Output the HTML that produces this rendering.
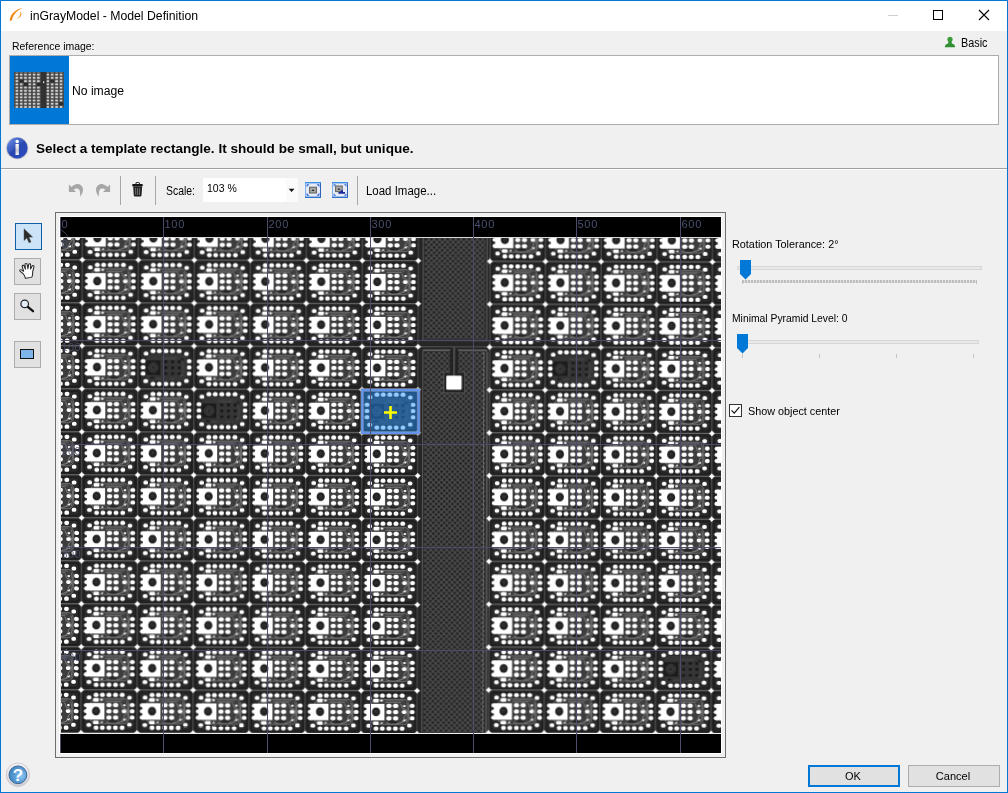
<!DOCTYPE html>
<html lang="en">
<head>
<meta charset="utf-8">
<title>inGrayModel - Model Definition</title>
<style>
*{box-sizing:border-box;margin:0;padding:0}
html,body{width:1008px;height:793px;overflow:hidden;background:#f0f0f0}
body{position:relative;font-family:"Liberation Sans",sans-serif;font-size:12px;color:#000}
.abs{position:absolute}
.t{position:absolute;white-space:nowrap;line-height:1}
#frame{position:absolute;left:0;top:0;width:1008px;height:793px;border:1px solid #0078d7;border-top-width:1px;pointer-events:none;z-index:50}
#titlebar{position:absolute;left:1px;top:1px;width:1006px;height:30px;background:#fff}
.btn{position:absolute;background:#e1e1e1;border:1px solid #adadad}
.sep{position:absolute;width:1px;background:#a8a8a8}
</style>
</head>
<body>
<div id="titlebar"></div>
<div id="frame"></div>

<!-- title icon -->
<svg class="abs" style="left:8px;top:6px" width="18" height="18" viewBox="0 0 18 18">
  <path d="M1.8 14.8 C1.9 8.6 7 3.4 15 1.8 C9 4.4 5.2 8.6 3.9 14.4 Z" fill="#f08a1c"/>
  <path d="M13 5.8 C14.3 9.3 12.4 12.3 7.8 12.9 C11.2 11.6 12.4 9.4 12.2 6.2 Z" fill="#f4a040"/>
</svg>
<div class="t" id="title" style="left:30px;top:10px;font-size:12.3px;transform:scaleX(0.9953);transform-origin:left center;">inGrayModel - Model Definition</div>

<!-- window controls -->
<div class="abs" style="left:888px;top:15px;width:10px;height:1px;background:#cfcfcf"></div>
<div class="abs" style="left:933px;top:10px;width:10px;height:10px;border:1px solid #000"></div>
<svg class="abs" style="left:978px;top:9px" width="12" height="12" viewBox="0 0 12 12"><path d="M1 1 L11 11 M11 1 L1 11" stroke="#000" stroke-width="1.1" fill="none"/></svg>

<!-- reference image header -->
<div class="t" id="reflabel" style="left:12px;top:41px;font-size:11px;transform:scaleX(0.9505);transform-origin:left center;">Reference image:</div>
<svg class="abs" style="left:944px;top:36px" width="12" height="12" viewBox="0 0 12 12">
  <circle cx="6" cy="3.3" r="2.6" fill="#3c9a3c"/>
  <path d="M4.6 5 L7.4 5 L7.9 7.4 C10 7.8 11 9 11.2 11.2 L0.8 11.2 C1 9 2 7.8 4.1 7.4 Z" fill="#2f8f32"/>
</svg>
<div class="t" id="basic" style="left:961.3px;top:37px;font-size:12px;transform:scaleX(0.9010);transform-origin:left center;">Basic</div>

<!-- reference list -->
<div class="abs" style="left:9px;top:55px;width:990px;height:70px;background:#fff;border:1px solid #adadad"></div>
<div class="abs" style="left:10px;top:56px;width:59px;height:68px;background:#0078d7"></div>
<svg class="abs" style="left:14px;top:72px" width="50" height="36" viewBox="0 0 50 36">
  <defs>
    <pattern id="thumbp" width="4.3" height="3.24" patternUnits="userSpaceOnUse" x="0.75" y="1">
      <rect width="4.3" height="3.24" fill="#484848"/>
      <rect x="0.8" y="0.55" width="2.7" height="2.1" rx="0.6" fill="#cdcdcd"/>
    </pattern>
    <pattern id="thumbq" width="4.44" height="3.24" patternUnits="userSpaceOnUse" x="31.5" y="1">
      <rect width="4.44" height="3.24" fill="#484848"/>
      <rect x="0.85" y="0.55" width="2.75" height="2.1" rx="0.6" fill="#cdcdcd"/>
    </pattern>
    <filter id="tblur" x="-5%" y="-5%" width="110%" height="110%"><feGaussianBlur stdDeviation="0.45"/></filter>
    <clipPath id="tclip"><rect width="50" height="36"/></clipPath>
  </defs>
  <g clip-path="url(#tclip)"><g filter="url(#tblur)">
  <rect x="-2" y="-2" width="54" height="40" fill="url(#thumbp)"/>
  <rect x="31.5" y="-2" width="22" height="40" fill="url(#thumbq)"/>
  <rect x="27" y="-2" width="5.4" height="40" fill="#303030"/>
  <rect x="5.6" y="7.6" width="4" height="3" fill="#2c2c2c"/>
  <rect x="10" y="10.9" width="4" height="3" fill="#2c2c2c"/>
  <rect x="22.8" y="10.9" width="4" height="3" fill="#2c2c2c"/>
  <rect x="36.1" y="7.6" width="4" height="3" fill="#2c2c2c"/>
  <rect x="45" y="30.3" width="4" height="3" fill="#2c2c2c"/>
  <rect x="29" y="9.3" width="1.3" height="1.8" fill="#d8d8d8"/>
  </g></g>
</svg>
<div class="t" id="noimage" style="left:72px;top:85px;font-size:12.3px;transform:scaleX(0.9886);transform-origin:left center;">No image</div>

<!-- info row -->
<svg class="abs" style="left:5px;top:136px" width="25" height="25" viewBox="-0.2 0 25 25">
  <defs>
    <linearGradient id="ig" x1="0.1" y1="0.05" x2="0.85" y2="0.95">
      <stop offset="0" stop-color="#6a8ae4"/>
      <stop offset="0.45" stop-color="#3556bc"/>
      <stop offset="0.5" stop-color="#2947ae"/>
      <stop offset="1" stop-color="#2b4cc0"/>
    </linearGradient>
    <linearGradient id="istem" x1="0" y1="0" x2="0" y2="1">
      <stop offset="0" stop-color="#fff"/><stop offset="0.6" stop-color="#c8c8cc"/><stop offset="1" stop-color="#f4f4f4"/>
    </linearGradient>
  </defs>
  <circle cx="12" cy="12.2" r="11.1" fill="#c4c4cc"/>
  <circle cx="12" cy="12" r="10.4" fill="url(#ig)"/>
  <rect x="10.3" y="8" width="3.4" height="10.9" rx="0.5" fill="url(#istem)"/>
  <circle cx="12" cy="5.6" r="1.75" fill="#fff"/>
</svg>
<div class="t" id="info" style="left:36px;top:142px;font-size:13px;font-weight:bold;transform:scaleX(1.0431);transform-origin:left center;">Select a template rectangle. It should be small, but unique.</div>
<div class="abs" style="left:1px;top:168px;width:1006px;height:1px;background:#a0a0a0"></div>
<div class="abs" style="left:1px;top:169px;width:1006px;height:1px;background:#fff"></div>

<!-- toolbar -->
<svg class="abs" style="left:68px;top:183px" width="16" height="14" viewBox="0 0 16 14">
  <path d="M0.9 1.4 L0.9 8.9 L7.9 8.9 L5.7 6.6 C7.5 5 10.5 5 11.6 7.4 C12.3 9 12.2 11.5 12.3 13.8 C14 11 15.4 8.5 14.9 5.6 C14.2 2 10.5 0.4 7.5 1.4 C5.8 1.9 4.6 2.8 3.5 4.1 Z" fill="#a6a6a6"/>
</svg>
<svg class="abs" style="left:95px;top:183px" width="16" height="14" viewBox="0 0 16 14">
  <g transform="translate(16,0) scale(-1,1)">
  <path d="M0.9 1.4 L0.9 8.9 L7.9 8.9 L5.7 6.6 C7.5 5 10.5 5 11.6 7.4 C12.3 9 12.2 11.5 12.3 13.8 C14 11 15.4 8.5 14.9 5.6 C14.2 2 10.5 0.4 7.5 1.4 C5.8 1.9 4.6 2.8 3.5 4.1 Z" fill="#a6a6a6"/>
  </g>
</svg>
<div class="sep" style="left:120px;top:176px;height:29px"></div>
<svg class="abs" style="left:131px;top:182px" width="14" height="16" viewBox="0 0 14 16">
  <path d="M5 2 V1.1 C5 0.6 5.3 0.4 5.8 0.4 H7.6 C8.1 0.4 8.4 0.6 8.4 1.1 V2" fill="none" stroke="#1a1a1a" stroke-width="1"/>
  <rect x="1.2" y="1.9" width="10.6" height="2.5" rx="0.9" fill="#141414"/>
  <path d="M2.2 4.4 L11.1 4.4 L10.5 13.4 C10.4 14.1 10 14.4 9.4 14.4 L3.9 14.4 C3.3 14.4 2.9 14.1 2.8 13.4 Z" fill="#1e1e1e"/>
  <path d="M4.6 5.8 L4.8 13 M6.65 5.8 L6.65 13 M8.7 5.8 L8.5 13" stroke="#8c8c8c" stroke-width="0.8"/>
</svg>
<div class="sep" style="left:155px;top:176px;height:29px"></div>
<div class="t" id="scale" style="left:165.5px;top:185px;font-size:12px;transform:scaleX(0.8683);transform-origin:left center;">Scale:</div>
<div class="abs" style="left:203px;top:178px;width:95px;height:24px;background:#fff"></div>
<div class="abs" style="left:286px;top:178px;width:12px;height:24px;background:#fafafa"></div>
<div class="t" id="pct" style="left:206.8px;top:183px;font-size:11px;transform:scaleX(0.9519);transform-origin:left center;">103 %</div>
<svg class="abs" style="left:288px;top:188px" width="7" height="5" viewBox="0 0 7 5"><path d="M0.7 0.7 L6.5 0.7 L3.6 4 Z" fill="#111"/></svg>

<svg class="abs" style="left:305px;top:182px" width="16" height="16" viewBox="0 0 16 16">
  <rect x="0" y="0" width="16" height="16" fill="#e6ecf6"/>
  <path d="M0.5 0 V16" stroke="#7db4ee" stroke-width="1"/><path d="M15.5 0 V16" stroke="#2f62b4" stroke-width="1"/>
  <path d="M0 0.7 H16" stroke="#3c8ee6" stroke-width="1.4"/><path d="M0 15.3 H16" stroke="#2f74cc" stroke-width="1.4"/>
  <path d="M1.6 2.2 H4.6 L1.6 5.2 Z M14.4 2.2 H11.4 L14.4 5.2 Z M1.6 13.8 H4.6 L1.6 10.8 Z M14.4 13.8 H11.4 L14.4 10.8 Z" fill="#3a6fe0"/>
  <rect x="4.6" y="5.2" width="6.8" height="5.8" fill="#a8a8a8" stroke="#5e5e5e" stroke-width="1"/>
  <path d="M6.4 9 L8 7.2 L9.6 9 Z" fill="#222"/>
</svg>
<svg class="abs" style="left:332px;top:182px" width="16" height="16" viewBox="0 0 16 16">
  <rect x="0" y="0" width="16" height="16" fill="#e6ecf6"/>
  <path d="M0.5 0 V16" stroke="#7db4ee" stroke-width="1"/><path d="M15.5 0 V16" stroke="#2f62b4" stroke-width="1"/>
  <path d="M0 0.7 H16" stroke="#3c8ee6" stroke-width="1.4"/><path d="M0 15.3 H16" stroke="#2f74cc" stroke-width="1.4"/>
  <path d="M1.6 2.2 H4.2 L1.6 4.8 Z M14.4 2.2 H11.8 L14.4 4.8 Z M1.6 13.8 H4.2 L1.6 11.2 Z M14.4 13.8 H11.8 L14.4 11.2 Z" fill="#3a6fe0"/>
  <rect x="3.6" y="4" width="6.6" height="5.6" fill="#a8a8a8" stroke="#5e5e5e" stroke-width="1"/>
  <path d="M5.4 7.8 L6.9 6 L8.4 7.8 Z" fill="#222"/>
  <path d="M8.6 8.2 H11 V10 H13 V11.8 H6.4 V10 H8.6 Z" fill="#1b2a9a"/>
</svg>
<div class="sep" style="left:357px;top:176px;height:29px"></div>
<div class="t" id="load" style="left:365.5px;top:185px;font-size:12px;transform:scaleX(0.9550);transform-origin:left center;">Load Image...</div>

<!-- left tool buttons -->
<div class="btn" style="left:15px;top:223px;width:27px;height:27px;background:#cce4f7;border-color:#0f5fa8"></div>
<svg class="abs" style="left:23px;top:228px" width="12" height="17" viewBox="0 0 12 17">
  <path d="M1 0.8 L1 12.6 L3.9 9.9 L6 14.8 L8 13.9 L5.9 9.2 L9.6 9 Z" fill="#2b2b2b" stroke="#555" stroke-width="0.5"/>
</svg>
<div class="btn" style="left:14px;top:258px;width:27px;height:27px"></div>
<svg class="abs" style="left:18px;top:262px" width="19" height="19" viewBox="0 0 19 19">
  <path transform="translate(9.5 9) rotate(-8) scale(1.28 1.12) translate(-9 -8.4)" d="M5.5 10.5 L3.2 7.6 C2.6 6.8 3.6 5.9 4.4 6.6 L6 8.2 L5.4 3.6 C5.3 2.6 6.7 2.4 6.9 3.4 L7.6 6.6 L7.8 2.2 C7.8 1.2 9.3 1.2 9.4 2.2 L9.6 6.5 L10.6 2.8 C10.9 1.8 12.2 2.1 12.1 3.1 L11.6 7 L13.2 4.6 C13.8 3.8 14.9 4.5 14.5 5.4 L13 9.4 C12.8 11.6 12.6 13 11.6 14.6 L6.6 14.6 C6.4 12.8 6.2 11.6 5.5 10.5 Z" fill="#fff" stroke="#222" stroke-width="0.8" stroke-linejoin="round"/>
</svg>
<div class="btn" style="left:14px;top:293px;width:27px;height:27px"></div>
<svg class="abs" style="left:19px;top:298px" width="17" height="17" viewBox="0 0 17 17">
  <circle cx="5.7" cy="5.9" r="3.8" fill="#e4ecf6" stroke="#222" stroke-width="1.2"/>
  <path d="M8.8 8.9 L14 13.2" stroke="#111" stroke-width="2.3" stroke-linecap="round"/>
</svg>
<div class="btn" style="left:14px;top:341px;width:27px;height:27px"></div>
<div class="abs" style="left:20px;top:349px;width:14px;height:10px;background:#7eb4ea;border:1px solid #111"></div>

<!-- image panel frame -->
<div class="abs" style="left:55px;top:212px;width:671px;height:546px;background:#f0f0f0;border:1px solid #6d6d6d"></div>
<div class="abs" style="left:59px;top:216px;width:663px;height:538px;background:#fff"></div>
<svg class="abs" style="left:60px;top:217px" width="661" height="536" viewBox="60 217 661 536">
<defs>
<clipPath id="imgclip"><rect x="60" y="238" width="661" height="495"/></clipPath>
<filter id="soft" x="-2%" y="-2%" width="104%" height="104%"><feGaussianBlur stdDeviation="0.42"/></filter>
<g id="cn"><rect x="0" y="0" width="56.2" height="43.2" fill="#242424"/><rect x="2.6" y="2.6" width="50.8" height="37.8" rx="3" ry="3" fill="#292929" stroke="#1e1e1e" stroke-width="1.1"/><path d="M0 0 H56" stroke="#888888" stroke-width="0.8" fill="none"/><path d="M0 0 V43" stroke="#5e5e5e" stroke-width="0.8" fill="none"/><rect x="9.5" y="8.6" width="38.4" height="25.4" rx="5.5" ry="5.5" fill="#3e3e3e" stroke="#727272" stroke-width="0.9"/><path d="M24 10.2 H42.5 M24 11.8 H40" stroke="#868686" stroke-width="0.6"/><path d="M39.4 13 C41.5 15.5 39.5 17.5 43.6 18.4 C47 19.4 46.6 23 44.4 24.6 C42.6 26 43.6 28.6 40.8 31.6" stroke="#9a9a9a" stroke-width="0.8" fill="none"/><path d="M45.6 12 C47.4 16 47.4 27 45.4 31.2" stroke="#808080" stroke-width="0.8" fill="none"/><path d="M25 32.2 C31 34 39 33.4 44.4 29.8" stroke="#888" stroke-width="0.9" fill="none"/><ellipse cx="32" cy="31.2" rx="4.5" ry="1.6" fill="#282828"/><rect x="12.65" y="2.9" width="4.7" height="4.2" rx="1.83" ry="1.64" fill="#fff"/><rect x="12.65" y="35.8" width="4.7" height="4.2" rx="1.83" ry="1.64" fill="#fff"/><rect x="18.95" y="2.9" width="4.7" height="4.2" rx="1.83" ry="1.64" fill="#fff"/><rect x="18.95" y="35.8" width="4.7" height="4.2" rx="1.83" ry="1.64" fill="#fff"/><rect x="25.55" y="2.9" width="4.7" height="4.2" rx="1.83" ry="1.64" fill="#fff"/><rect x="25.55" y="35.8" width="4.7" height="4.2" rx="1.83" ry="1.64" fill="#fff"/><rect x="32.05" y="2.9" width="4.7" height="4.2" rx="1.83" ry="1.64" fill="#fff"/><rect x="32.05" y="35.8" width="4.7" height="4.2" rx="1.83" ry="1.64" fill="#fff"/><rect x="38.75" y="2.9" width="4.7" height="4.2" rx="1.83" ry="1.64" fill="#fff"/><rect x="38.75" y="35.8" width="4.7" height="4.2" rx="1.83" ry="1.64" fill="#fff"/><rect x="5.7" y="5.5" width="4.6" height="4" rx="1.79" ry="1.56" fill="#fff"/><rect x="46.1" y="5.7" width="4.6" height="4" rx="1.79" ry="1.56" fill="#fff"/><rect x="5.5" y="33" width="4.6" height="4" rx="1.79" ry="1.56" fill="#fff"/><rect x="46.1" y="32.9" width="4.6" height="4" rx="1.79" ry="1.56" fill="#fff"/><rect x="48.75" y="13.05" width="4.7" height="4.1" rx="1.83" ry="1.6" fill="#fff"/><rect x="48.75" y="19.3" width="4.7" height="4.1" rx="1.83" ry="1.6" fill="#fff"/><rect x="48.75" y="25.55" width="4.7" height="4.1" rx="1.83" ry="1.6" fill="#fff"/><rect x="5.3" y="13.2" width="18.1" height="16.5" fill="#fff"/><ellipse cx="5.2" cy="15.3" rx="2.6" ry="2.1" fill="#fff"/><ellipse cx="5.2" cy="21.4" rx="2.6" ry="2" fill="#fff"/><ellipse cx="5.2" cy="27.55" rx="2.6" ry="2.15" fill="#fff"/><ellipse cx="15" cy="21.2" rx="4.1" ry="4.45" fill="#242424"/><ellipse cx="14.8" cy="20.8" rx="1.5" ry="1.7" fill="#303030"/><rect x="12" y="8.1" width="5.7" height="3.7" rx="1" fill="#fff"/><ellipse cx="20.4" cy="10" rx="1.5" ry="1.1" fill="#f4f4f4"/><rect x="12" y="30.7" width="5.6" height="3.6" rx="1" fill="#fff"/><path d="M18.8 32.9 L21.4 31 L21.8 33 Z" fill="#f4f4f4"/><rect x="25.35" y="12.95" width="5.1" height="4.3" rx="1.99" ry="1.68" fill="#fff"/><rect x="25.35" y="19.2" width="5.1" height="4.3" rx="1.99" ry="1.68" fill="#fff"/><rect x="25.35" y="25.45" width="5.1" height="4.3" rx="1.99" ry="1.68" fill="#fff"/><rect x="32.05" y="12.95" width="5.1" height="4.3" rx="1.99" ry="1.68" fill="#fff"/><rect x="32.05" y="19.2" width="5.1" height="4.3" rx="1.99" ry="1.68" fill="#fff"/><rect x="32.05" y="25.45" width="5.1" height="4.3" rx="1.99" ry="1.68" fill="#fff"/><rect x="40.75" y="19.45" width="4.5" height="3.8" rx="1.76" ry="1.48" fill="#fff"/><rect x="42" y="14.2" width="2.6" height="2.2" rx="1.01" ry="0.86" fill="#f0f0f0"/><path d="M41.6 29.6 L45 28.2 L44.2 30.8 Z" fill="#f4f4f4"/></g>
<g id="cd"><rect x="0" y="0" width="56.2" height="43.2" fill="#242424"/><rect x="2.6" y="2.6" width="50.8" height="37.8" rx="3" ry="3" fill="#292929" stroke="#1e1e1e" stroke-width="1.1"/><path d="M0 0 H56" stroke="#888888" stroke-width="0.8" fill="none"/><path d="M0 0 V43" stroke="#5e5e5e" stroke-width="0.8" fill="none"/><rect x="12.65" y="2.9" width="4.7" height="4.2" rx="1.83" ry="1.64" fill="#fff"/><rect x="12.65" y="35.8" width="4.7" height="4.2" rx="1.83" ry="1.64" fill="#fff"/><rect x="18.95" y="2.9" width="4.7" height="4.2" rx="1.83" ry="1.64" fill="#fff"/><rect x="18.95" y="35.8" width="4.7" height="4.2" rx="1.83" ry="1.64" fill="#fff"/><rect x="25.55" y="2.9" width="4.7" height="4.2" rx="1.83" ry="1.64" fill="#fff"/><rect x="25.55" y="35.8" width="4.7" height="4.2" rx="1.83" ry="1.64" fill="#fff"/><rect x="32.05" y="2.9" width="4.7" height="4.2" rx="1.83" ry="1.64" fill="#fff"/><rect x="32.05" y="35.8" width="4.7" height="4.2" rx="1.83" ry="1.64" fill="#fff"/><rect x="38.75" y="2.9" width="4.7" height="4.2" rx="1.83" ry="1.64" fill="#fff"/><rect x="38.75" y="35.8" width="4.7" height="4.2" rx="1.83" ry="1.64" fill="#fff"/><rect x="5.7" y="5.5" width="4.6" height="4" rx="1.79" ry="1.56" fill="#fff"/><rect x="46.1" y="5.7" width="4.6" height="4" rx="1.79" ry="1.56" fill="#fff"/><rect x="5.5" y="33" width="4.6" height="4" rx="1.79" ry="1.56" fill="#fff"/><rect x="46.1" y="32.9" width="4.6" height="4" rx="1.79" ry="1.56" fill="#fff"/><rect x="48.75" y="13.05" width="4.7" height="4.1" rx="1.83" ry="1.6" fill="#fff"/><rect x="2.75" y="13.05" width="4.7" height="4.1" rx="1.83" ry="1.6" fill="#fff"/><rect x="48.75" y="19.3" width="4.7" height="4.1" rx="1.83" ry="1.6" fill="#fff"/><rect x="2.75" y="19.3" width="4.7" height="4.1" rx="1.83" ry="1.6" fill="#fff"/><rect x="48.75" y="25.55" width="4.7" height="4.1" rx="1.83" ry="1.6" fill="#fff"/><rect x="2.75" y="25.55" width="4.7" height="4.1" rx="1.83" ry="1.6" fill="#fff"/><rect x="8.6" y="8.8" width="40" height="25.6" rx="5.5" ry="5.5" fill="#343434" stroke="#3e3e3e" stroke-width="0.6"/><rect x="8" y="14.4" width="14.6" height="14.4" fill="#1b1b1b"/><circle cx="15.2" cy="21.6" r="4.7" fill="#2a2a2a" stroke="#4a4a4a" stroke-width="0.8"/><circle cx="15.2" cy="21.6" r="2.5" fill="#343434" stroke="#484848" stroke-width="0.6"/><circle cx="15.2" cy="21.6" r="1" fill="#1e1e1e"/><rect x="26.4" y="14.4" width="3" height="2.6" rx="1.17" ry="1.01" fill="#181818"/><rect x="26.4" y="20.4" width="3" height="2.6" rx="1.17" ry="1.01" fill="#181818"/><rect x="26.4" y="26.3" width="3" height="2.6" rx="1.17" ry="1.01" fill="#181818"/><rect x="33.1" y="14.4" width="3" height="2.6" rx="1.17" ry="1.01" fill="#181818"/><rect x="33.1" y="20.4" width="3" height="2.6" rx="1.17" ry="1.01" fill="#181818"/><rect x="33.1" y="26.3" width="3" height="2.6" rx="1.17" ry="1.01" fill="#181818"/><rect x="39.7" y="14.4" width="3" height="2.6" rx="1.17" ry="1.01" fill="#181818"/><rect x="39.7" y="20.4" width="3" height="2.6" rx="1.17" ry="1.01" fill="#181818"/><rect x="39.7" y="26.3" width="3" height="2.6" rx="1.17" ry="1.01" fill="#181818"/><path d="M23.5 11.4 H40 M26 12.8 H38" stroke="#505050" stroke-width="0.6"/><path d="M24.2 12.5 L23.2 14 M23.4 16 V29" stroke="#4c4c4c" stroke-width="0.6"/><path d="M41.5 12.5 C46 15 46.6 26 42.6 31.6 M42 29 H46 M18 32.4 H24 M32 32.6 H37" stroke="#4e4e4e" stroke-width="0.8" fill="none"/><ellipse cx="14" cy="31.8" rx="2" ry="1.2" fill="#1f1f1f"/><ellipse cx="44" cy="13.4" rx="1.8" ry="1.4" fill="#222"/></g>
<pattern id="mesh" width="5.4" height="5.4" patternUnits="userSpaceOnUse" x="424" y="238"><rect width="5.4" height="5.4" fill="#494949"/><circle cx="1.35" cy="1.35" r="1.3" fill="#1f1f1f"/><circle cx="4.05" cy="4.05" r="1.3" fill="#1f1f1f"/></pattern>
</defs>
<rect x="60" y="217" width="661" height="536" fill="#000"/>
<rect x="60" y="237" width="661" height="1" fill="#d8d8d8"/>
<rect x="60" y="733" width="661" height="1" fill="#f0f0f0"/>
<g clip-path="url(#imgclip)">
<rect x="60" y="237" width="661" height="496" fill="#2c2c2c"/>
<g filter="url(#soft)"><g transform="rotate(0.16 390 485)">
<use href="#cn" x="25.7" y="217.7"/>
<use href="#cn" x="25.7" y="260.7"/>
<use href="#cn" x="25.7" y="303.7"/>
<use href="#cn" x="25.7" y="346.7"/>
<use href="#cn" x="25.7" y="389.7"/>
<use href="#cn" x="25.7" y="432.7"/>
<use href="#cn" x="25.7" y="475.7"/>
<use href="#cn" x="25.7" y="518.7"/>
<use href="#cn" x="25.7" y="561.7"/>
<use href="#cn" x="25.7" y="604.7"/>
<use href="#cn" x="25.7" y="647.7"/>
<use href="#cn" x="25.7" y="690.7"/>
<use href="#cn" x="25.7" y="733.7"/>
<use href="#cn" x="81.7" y="217.7"/>
<use href="#cn" x="81.7" y="260.7"/>
<use href="#cn" x="81.7" y="303.7"/>
<use href="#cn" x="81.7" y="346.7"/>
<use href="#cn" x="81.7" y="389.7"/>
<use href="#cn" x="81.7" y="432.7"/>
<use href="#cn" x="81.7" y="475.7"/>
<use href="#cn" x="81.7" y="518.7"/>
<use href="#cn" x="81.7" y="561.7"/>
<use href="#cn" x="81.7" y="604.7"/>
<use href="#cn" x="81.7" y="647.7"/>
<use href="#cn" x="81.7" y="690.7"/>
<use href="#cn" x="81.7" y="733.7"/>
<use href="#cn" x="137.7" y="217.7"/>
<use href="#cn" x="137.7" y="260.7"/>
<use href="#cn" x="137.7" y="303.7"/>
<use href="#cd" x="137.7" y="346.7"/>
<use href="#cn" x="137.7" y="389.7"/>
<use href="#cn" x="137.7" y="432.7"/>
<use href="#cn" x="137.7" y="475.7"/>
<use href="#cn" x="137.7" y="518.7"/>
<use href="#cn" x="137.7" y="561.7"/>
<use href="#cn" x="137.7" y="604.7"/>
<use href="#cn" x="137.7" y="647.7"/>
<use href="#cn" x="137.7" y="690.7"/>
<use href="#cn" x="137.7" y="733.7"/>
<use href="#cn" x="193.7" y="217.7"/>
<use href="#cn" x="193.7" y="260.7"/>
<use href="#cn" x="193.7" y="303.7"/>
<use href="#cn" x="193.7" y="346.7"/>
<use href="#cd" x="193.7" y="389.7"/>
<use href="#cn" x="193.7" y="432.7"/>
<use href="#cn" x="193.7" y="475.7"/>
<use href="#cn" x="193.7" y="518.7"/>
<use href="#cn" x="193.7" y="561.7"/>
<use href="#cn" x="193.7" y="604.7"/>
<use href="#cn" x="193.7" y="647.7"/>
<use href="#cn" x="193.7" y="690.7"/>
<use href="#cn" x="193.7" y="733.7"/>
<use href="#cn" x="249.7" y="217.7"/>
<use href="#cn" x="249.7" y="260.7"/>
<use href="#cn" x="249.7" y="303.7"/>
<use href="#cn" x="249.7" y="346.7"/>
<use href="#cn" x="249.7" y="389.7"/>
<use href="#cn" x="249.7" y="432.7"/>
<use href="#cn" x="249.7" y="475.7"/>
<use href="#cn" x="249.7" y="518.7"/>
<use href="#cn" x="249.7" y="561.7"/>
<use href="#cn" x="249.7" y="604.7"/>
<use href="#cn" x="249.7" y="647.7"/>
<use href="#cn" x="249.7" y="690.7"/>
<use href="#cn" x="249.7" y="733.7"/>
<use href="#cn" x="305.7" y="217.7"/>
<use href="#cn" x="305.7" y="260.7"/>
<use href="#cn" x="305.7" y="303.7"/>
<use href="#cn" x="305.7" y="346.7"/>
<use href="#cn" x="305.7" y="389.7"/>
<use href="#cn" x="305.7" y="432.7"/>
<use href="#cn" x="305.7" y="475.7"/>
<use href="#cn" x="305.7" y="518.7"/>
<use href="#cn" x="305.7" y="561.7"/>
<use href="#cn" x="305.7" y="604.7"/>
<use href="#cn" x="305.7" y="647.7"/>
<use href="#cn" x="305.7" y="690.7"/>
<use href="#cn" x="305.7" y="733.7"/>
<use href="#cn" x="361.7" y="217.7"/>
<use href="#cn" x="361.7" y="260.7"/>
<use href="#cn" x="361.7" y="303.7"/>
<use href="#cn" x="361.7" y="346.7"/>
<use href="#cd" x="361.7" y="389.7"/>
<use href="#cn" x="361.7" y="432.7"/>
<use href="#cn" x="361.7" y="475.7"/>
<use href="#cn" x="361.7" y="518.7"/>
<use href="#cn" x="361.7" y="561.7"/>
<use href="#cn" x="361.7" y="604.7"/>
<use href="#cn" x="361.7" y="647.7"/>
<use href="#cn" x="361.7" y="690.7"/>
<use href="#cn" x="361.7" y="733.7"/>
<use href="#cn" x="489.2" y="218.18"/>
<use href="#cn" x="489.2" y="261.05"/>
<use href="#cn" x="489.2" y="303.92"/>
<use href="#cn" x="489.2" y="346.79"/>
<use href="#cn" x="489.2" y="389.66"/>
<use href="#cn" x="489.2" y="432.53"/>
<use href="#cn" x="489.2" y="475.4"/>
<use href="#cn" x="489.2" y="518.27"/>
<use href="#cn" x="489.2" y="561.14"/>
<use href="#cn" x="489.2" y="604.01"/>
<use href="#cn" x="489.2" y="646.88"/>
<use href="#cn" x="489.2" y="689.75"/>
<use href="#cn" x="489.2" y="732.62"/>
<use href="#cn" x="544.85" y="218.18"/>
<use href="#cn" x="544.85" y="261.05"/>
<use href="#cn" x="544.85" y="303.92"/>
<use href="#cd" x="544.85" y="346.79"/>
<use href="#cn" x="544.85" y="389.66"/>
<use href="#cn" x="544.85" y="432.53"/>
<use href="#cn" x="544.85" y="475.4"/>
<use href="#cn" x="544.85" y="518.27"/>
<use href="#cn" x="544.85" y="561.14"/>
<use href="#cn" x="544.85" y="604.01"/>
<use href="#cn" x="544.85" y="646.88"/>
<use href="#cn" x="544.85" y="689.75"/>
<use href="#cn" x="544.85" y="732.62"/>
<use href="#cn" x="600.5" y="218.18"/>
<use href="#cn" x="600.5" y="261.05"/>
<use href="#cn" x="600.5" y="303.92"/>
<use href="#cn" x="600.5" y="346.79"/>
<use href="#cn" x="600.5" y="389.66"/>
<use href="#cn" x="600.5" y="432.53"/>
<use href="#cn" x="600.5" y="475.4"/>
<use href="#cn" x="600.5" y="518.27"/>
<use href="#cn" x="600.5" y="561.14"/>
<use href="#cn" x="600.5" y="604.01"/>
<use href="#cn" x="600.5" y="646.88"/>
<use href="#cn" x="600.5" y="689.75"/>
<use href="#cn" x="600.5" y="732.62"/>
<use href="#cn" x="656.15" y="218.18"/>
<use href="#cn" x="656.15" y="261.05"/>
<use href="#cn" x="656.15" y="303.92"/>
<use href="#cn" x="656.15" y="346.79"/>
<use href="#cn" x="656.15" y="389.66"/>
<use href="#cn" x="656.15" y="432.53"/>
<use href="#cn" x="656.15" y="475.4"/>
<use href="#cn" x="656.15" y="518.27"/>
<use href="#cn" x="656.15" y="561.14"/>
<use href="#cn" x="656.15" y="604.01"/>
<use href="#cd" x="656.15" y="646.88"/>
<use href="#cn" x="656.15" y="689.75"/>
<use href="#cn" x="656.15" y="732.62"/>
<use href="#cn" x="711.8" y="218.18"/>
<use href="#cn" x="711.8" y="261.05"/>
<use href="#cn" x="711.8" y="303.92"/>
<use href="#cn" x="711.8" y="346.79"/>
<use href="#cn" x="711.8" y="389.66"/>
<use href="#cn" x="711.8" y="432.53"/>
<use href="#cn" x="711.8" y="475.4"/>
<use href="#cn" x="711.8" y="518.27"/>
<use href="#cn" x="711.8" y="561.14"/>
<use href="#cn" x="711.8" y="604.01"/>
<use href="#cn" x="711.8" y="646.88"/>
<use href="#cn" x="711.8" y="689.75"/>
<use href="#cn" x="711.8" y="732.62"/>
<rect x="417.7" y="230" width="71.5" height="510" fill="#262626"/>
<path d="M417.7 230 V740 M489.2 230 V740" stroke="#4e4e4e" stroke-width="0.9"/>
<rect x="422.6" y="228" width="63.8" height="112.3" fill="#2c2c2c" stroke="#606060" stroke-width="0.9"/>
<rect x="424.3" y="228" width="60.4" height="110.6" fill="url(#mesh)"/>
<rect x="422.6" y="350.1" width="63.8" height="400" fill="#2c2c2c" stroke="#606060" stroke-width="0.9"/>
<path d="M423 350.1 H486" stroke="#7c7c7c" stroke-width="0.8"/>
<rect x="424.3" y="351.8" width="60.4" height="400" fill="url(#mesh)"/>
<path d="M417.7 346.7 H489.2" stroke="#5a5a5a" stroke-width="0.9"/>
<rect x="449.6" y="349.3" width="8.4" height="26" fill="#242424"/>
<rect x="443.4" y="372" width="21.2" height="20.8" fill="#242424" stroke="#5c5c5c" stroke-width="0.8"/>
<rect x="450.2" y="349.3" width="7.2" height="24" fill="#242424"/>
<path d="M453.8 347.2 V376" stroke="#6e6e6e" stroke-width="1.1"/>
<rect x="446" y="375.6" width="15.4" height="13.8" rx="0.8" fill="#fff"/>
<path d="M483.6 352 V740" stroke="#8e8e8e" stroke-width="0.8" stroke-dasharray="3 1.2"/><path d="M487.4 352 V740" stroke="#5a5a5a" stroke-width="0.7"/>
<path d="M81.7 257.7 L83.05 259.35 L84.7 260.7 L83.05 262.05 L81.7 263.7 L80.35 262.05 L78.7 260.7 L80.35 259.35 Z" fill="#fff"/>
<path d="M137.7 257.7 L139.05 259.35 L140.7 260.7 L139.05 262.05 L137.7 263.7 L136.35 262.05 L134.7 260.7 L136.35 259.35 Z" fill="#fff"/>
<path d="M193.7 257.7 L195.05 259.35 L196.7 260.7 L195.05 262.05 L193.7 263.7 L192.35 262.05 L190.7 260.7 L192.35 259.35 Z" fill="#fff"/>
<path d="M249.7 257.7 L251.05 259.35 L252.7 260.7 L251.05 262.05 L249.7 263.7 L248.35 262.05 L246.7 260.7 L248.35 259.35 Z" fill="#fff"/>
<path d="M305.7 257.7 L307.05 259.35 L308.7 260.7 L307.05 262.05 L305.7 263.7 L304.35 262.05 L302.7 260.7 L304.35 259.35 Z" fill="#fff"/>
<path d="M361.7 257.7 L363.05 259.35 L364.7 260.7 L363.05 262.05 L361.7 263.7 L360.35 262.05 L358.7 260.7 L360.35 259.35 Z" fill="#fff"/>
<path d="M417.7 257.7 L419.05 259.35 L420.7 260.7 L419.05 262.05 L417.7 263.7 L416.35 262.05 L414.7 260.7 L416.35 259.35 Z" fill="#fff"/>
<path d="M489.2 258.05 L490.55 259.7 L492.2 261.05 L490.55 262.4 L489.2 264.05 L487.85 262.4 L486.2 261.05 L487.85 259.7 Z" fill="#fff"/>
<path d="M544.85 258.05 L546.2 259.7 L547.85 261.05 L546.2 262.4 L544.85 264.05 L543.5 262.4 L541.85 261.05 L543.5 259.7 Z" fill="#fff"/>
<path d="M600.5 258.05 L601.85 259.7 L603.5 261.05 L601.85 262.4 L600.5 264.05 L599.15 262.4 L597.5 261.05 L599.15 259.7 Z" fill="#fff"/>
<path d="M656.15 258.05 L657.5 259.7 L659.15 261.05 L657.5 262.4 L656.15 264.05 L654.8 262.4 L653.15 261.05 L654.8 259.7 Z" fill="#fff"/>
<path d="M711.8 258.05 L713.15 259.7 L714.8 261.05 L713.15 262.4 L711.8 264.05 L710.45 262.4 L708.8 261.05 L710.45 259.7 Z" fill="#fff"/>
<path d="M81.7 300.7 L83.05 302.35 L84.7 303.7 L83.05 305.05 L81.7 306.7 L80.35 305.05 L78.7 303.7 L80.35 302.35 Z" fill="#fff"/>
<path d="M137.7 300.7 L139.05 302.35 L140.7 303.7 L139.05 305.05 L137.7 306.7 L136.35 305.05 L134.7 303.7 L136.35 302.35 Z" fill="#fff"/>
<path d="M193.7 300.7 L195.05 302.35 L196.7 303.7 L195.05 305.05 L193.7 306.7 L192.35 305.05 L190.7 303.7 L192.35 302.35 Z" fill="#fff"/>
<path d="M249.7 300.7 L251.05 302.35 L252.7 303.7 L251.05 305.05 L249.7 306.7 L248.35 305.05 L246.7 303.7 L248.35 302.35 Z" fill="#fff"/>
<path d="M305.7 300.7 L307.05 302.35 L308.7 303.7 L307.05 305.05 L305.7 306.7 L304.35 305.05 L302.7 303.7 L304.35 302.35 Z" fill="#fff"/>
<path d="M361.7 300.7 L363.05 302.35 L364.7 303.7 L363.05 305.05 L361.7 306.7 L360.35 305.05 L358.7 303.7 L360.35 302.35 Z" fill="#fff"/>
<path d="M417.7 300.7 L419.05 302.35 L420.7 303.7 L419.05 305.05 L417.7 306.7 L416.35 305.05 L414.7 303.7 L416.35 302.35 Z" fill="#fff"/>
<path d="M489.2 300.92 L490.55 302.57 L492.2 303.92 L490.55 305.27 L489.2 306.92 L487.85 305.27 L486.2 303.92 L487.85 302.57 Z" fill="#fff"/>
<path d="M544.85 300.92 L546.2 302.57 L547.85 303.92 L546.2 305.27 L544.85 306.92 L543.5 305.27 L541.85 303.92 L543.5 302.57 Z" fill="#fff"/>
<path d="M600.5 300.92 L601.85 302.57 L603.5 303.92 L601.85 305.27 L600.5 306.92 L599.15 305.27 L597.5 303.92 L599.15 302.57 Z" fill="#fff"/>
<path d="M656.15 300.92 L657.5 302.57 L659.15 303.92 L657.5 305.27 L656.15 306.92 L654.8 305.27 L653.15 303.92 L654.8 302.57 Z" fill="#fff"/>
<path d="M711.8 300.92 L713.15 302.57 L714.8 303.92 L713.15 305.27 L711.8 306.92 L710.45 305.27 L708.8 303.92 L710.45 302.57 Z" fill="#fff"/>
<path d="M81.7 343.7 L83.05 345.35 L84.7 346.7 L83.05 348.05 L81.7 349.7 L80.35 348.05 L78.7 346.7 L80.35 345.35 Z" fill="#fff"/>
<path d="M137.7 343.7 L139.05 345.35 L140.7 346.7 L139.05 348.05 L137.7 349.7 L136.35 348.05 L134.7 346.7 L136.35 345.35 Z" fill="#fff"/>
<path d="M193.7 343.7 L195.05 345.35 L196.7 346.7 L195.05 348.05 L193.7 349.7 L192.35 348.05 L190.7 346.7 L192.35 345.35 Z" fill="#fff"/>
<path d="M249.7 343.7 L251.05 345.35 L252.7 346.7 L251.05 348.05 L249.7 349.7 L248.35 348.05 L246.7 346.7 L248.35 345.35 Z" fill="#fff"/>
<path d="M305.7 343.7 L307.05 345.35 L308.7 346.7 L307.05 348.05 L305.7 349.7 L304.35 348.05 L302.7 346.7 L304.35 345.35 Z" fill="#fff"/>
<path d="M361.7 343.7 L363.05 345.35 L364.7 346.7 L363.05 348.05 L361.7 349.7 L360.35 348.05 L358.7 346.7 L360.35 345.35 Z" fill="#fff"/>
<path d="M417.7 343.7 L419.05 345.35 L420.7 346.7 L419.05 348.05 L417.7 349.7 L416.35 348.05 L414.7 346.7 L416.35 345.35 Z" fill="#fff"/>
<path d="M489.2 343.79 L490.55 345.44 L492.2 346.79 L490.55 348.14 L489.2 349.79 L487.85 348.14 L486.2 346.79 L487.85 345.44 Z" fill="#fff"/>
<path d="M544.85 343.79 L546.2 345.44 L547.85 346.79 L546.2 348.14 L544.85 349.79 L543.5 348.14 L541.85 346.79 L543.5 345.44 Z" fill="#fff"/>
<path d="M600.5 343.79 L601.85 345.44 L603.5 346.79 L601.85 348.14 L600.5 349.79 L599.15 348.14 L597.5 346.79 L599.15 345.44 Z" fill="#fff"/>
<path d="M656.15 343.79 L657.5 345.44 L659.15 346.79 L657.5 348.14 L656.15 349.79 L654.8 348.14 L653.15 346.79 L654.8 345.44 Z" fill="#fff"/>
<path d="M711.8 343.79 L713.15 345.44 L714.8 346.79 L713.15 348.14 L711.8 349.79 L710.45 348.14 L708.8 346.79 L710.45 345.44 Z" fill="#fff"/>
<path d="M81.7 386.7 L83.05 388.35 L84.7 389.7 L83.05 391.05 L81.7 392.7 L80.35 391.05 L78.7 389.7 L80.35 388.35 Z" fill="#fff"/>
<path d="M137.7 386.7 L139.05 388.35 L140.7 389.7 L139.05 391.05 L137.7 392.7 L136.35 391.05 L134.7 389.7 L136.35 388.35 Z" fill="#fff"/>
<path d="M193.7 386.7 L195.05 388.35 L196.7 389.7 L195.05 391.05 L193.7 392.7 L192.35 391.05 L190.7 389.7 L192.35 388.35 Z" fill="#fff"/>
<path d="M249.7 386.7 L251.05 388.35 L252.7 389.7 L251.05 391.05 L249.7 392.7 L248.35 391.05 L246.7 389.7 L248.35 388.35 Z" fill="#fff"/>
<path d="M305.7 386.7 L307.05 388.35 L308.7 389.7 L307.05 391.05 L305.7 392.7 L304.35 391.05 L302.7 389.7 L304.35 388.35 Z" fill="#fff"/>
<path d="M361.7 386.7 L363.05 388.35 L364.7 389.7 L363.05 391.05 L361.7 392.7 L360.35 391.05 L358.7 389.7 L360.35 388.35 Z" fill="#fff"/>
<path d="M417.7 386.7 L419.05 388.35 L420.7 389.7 L419.05 391.05 L417.7 392.7 L416.35 391.05 L414.7 389.7 L416.35 388.35 Z" fill="#fff"/>
<path d="M489.2 386.66 L490.55 388.31 L492.2 389.66 L490.55 391.01 L489.2 392.66 L487.85 391.01 L486.2 389.66 L487.85 388.31 Z" fill="#fff"/>
<path d="M544.85 386.66 L546.2 388.31 L547.85 389.66 L546.2 391.01 L544.85 392.66 L543.5 391.01 L541.85 389.66 L543.5 388.31 Z" fill="#fff"/>
<path d="M600.5 386.66 L601.85 388.31 L603.5 389.66 L601.85 391.01 L600.5 392.66 L599.15 391.01 L597.5 389.66 L599.15 388.31 Z" fill="#fff"/>
<path d="M656.15 386.66 L657.5 388.31 L659.15 389.66 L657.5 391.01 L656.15 392.66 L654.8 391.01 L653.15 389.66 L654.8 388.31 Z" fill="#fff"/>
<path d="M711.8 386.66 L713.15 388.31 L714.8 389.66 L713.15 391.01 L711.8 392.66 L710.45 391.01 L708.8 389.66 L710.45 388.31 Z" fill="#fff"/>
<path d="M81.7 429.7 L83.05 431.35 L84.7 432.7 L83.05 434.05 L81.7 435.7 L80.35 434.05 L78.7 432.7 L80.35 431.35 Z" fill="#fff"/>
<path d="M137.7 429.7 L139.05 431.35 L140.7 432.7 L139.05 434.05 L137.7 435.7 L136.35 434.05 L134.7 432.7 L136.35 431.35 Z" fill="#fff"/>
<path d="M193.7 429.7 L195.05 431.35 L196.7 432.7 L195.05 434.05 L193.7 435.7 L192.35 434.05 L190.7 432.7 L192.35 431.35 Z" fill="#fff"/>
<path d="M249.7 429.7 L251.05 431.35 L252.7 432.7 L251.05 434.05 L249.7 435.7 L248.35 434.05 L246.7 432.7 L248.35 431.35 Z" fill="#fff"/>
<path d="M305.7 429.7 L307.05 431.35 L308.7 432.7 L307.05 434.05 L305.7 435.7 L304.35 434.05 L302.7 432.7 L304.35 431.35 Z" fill="#fff"/>
<path d="M361.7 429.7 L363.05 431.35 L364.7 432.7 L363.05 434.05 L361.7 435.7 L360.35 434.05 L358.7 432.7 L360.35 431.35 Z" fill="#fff"/>
<path d="M417.7 429.7 L419.05 431.35 L420.7 432.7 L419.05 434.05 L417.7 435.7 L416.35 434.05 L414.7 432.7 L416.35 431.35 Z" fill="#fff"/>
<path d="M489.2 429.53 L490.55 431.18 L492.2 432.53 L490.55 433.88 L489.2 435.53 L487.85 433.88 L486.2 432.53 L487.85 431.18 Z" fill="#fff"/>
<path d="M544.85 429.53 L546.2 431.18 L547.85 432.53 L546.2 433.88 L544.85 435.53 L543.5 433.88 L541.85 432.53 L543.5 431.18 Z" fill="#fff"/>
<path d="M600.5 429.53 L601.85 431.18 L603.5 432.53 L601.85 433.88 L600.5 435.53 L599.15 433.88 L597.5 432.53 L599.15 431.18 Z" fill="#fff"/>
<path d="M656.15 429.53 L657.5 431.18 L659.15 432.53 L657.5 433.88 L656.15 435.53 L654.8 433.88 L653.15 432.53 L654.8 431.18 Z" fill="#fff"/>
<path d="M711.8 429.53 L713.15 431.18 L714.8 432.53 L713.15 433.88 L711.8 435.53 L710.45 433.88 L708.8 432.53 L710.45 431.18 Z" fill="#fff"/>
<path d="M81.7 472.7 L83.05 474.35 L84.7 475.7 L83.05 477.05 L81.7 478.7 L80.35 477.05 L78.7 475.7 L80.35 474.35 Z" fill="#fff"/>
<path d="M137.7 472.7 L139.05 474.35 L140.7 475.7 L139.05 477.05 L137.7 478.7 L136.35 477.05 L134.7 475.7 L136.35 474.35 Z" fill="#fff"/>
<path d="M193.7 472.7 L195.05 474.35 L196.7 475.7 L195.05 477.05 L193.7 478.7 L192.35 477.05 L190.7 475.7 L192.35 474.35 Z" fill="#fff"/>
<path d="M249.7 472.7 L251.05 474.35 L252.7 475.7 L251.05 477.05 L249.7 478.7 L248.35 477.05 L246.7 475.7 L248.35 474.35 Z" fill="#fff"/>
<path d="M305.7 472.7 L307.05 474.35 L308.7 475.7 L307.05 477.05 L305.7 478.7 L304.35 477.05 L302.7 475.7 L304.35 474.35 Z" fill="#fff"/>
<path d="M361.7 472.7 L363.05 474.35 L364.7 475.7 L363.05 477.05 L361.7 478.7 L360.35 477.05 L358.7 475.7 L360.35 474.35 Z" fill="#fff"/>
<path d="M417.7 472.7 L419.05 474.35 L420.7 475.7 L419.05 477.05 L417.7 478.7 L416.35 477.05 L414.7 475.7 L416.35 474.35 Z" fill="#fff"/>
<path d="M489.2 472.4 L490.55 474.05 L492.2 475.4 L490.55 476.75 L489.2 478.4 L487.85 476.75 L486.2 475.4 L487.85 474.05 Z" fill="#fff"/>
<path d="M544.85 472.4 L546.2 474.05 L547.85 475.4 L546.2 476.75 L544.85 478.4 L543.5 476.75 L541.85 475.4 L543.5 474.05 Z" fill="#fff"/>
<path d="M600.5 472.4 L601.85 474.05 L603.5 475.4 L601.85 476.75 L600.5 478.4 L599.15 476.75 L597.5 475.4 L599.15 474.05 Z" fill="#fff"/>
<path d="M656.15 472.4 L657.5 474.05 L659.15 475.4 L657.5 476.75 L656.15 478.4 L654.8 476.75 L653.15 475.4 L654.8 474.05 Z" fill="#fff"/>
<path d="M711.8 472.4 L713.15 474.05 L714.8 475.4 L713.15 476.75 L711.8 478.4 L710.45 476.75 L708.8 475.4 L710.45 474.05 Z" fill="#fff"/>
<path d="M81.7 515.7 L83.05 517.35 L84.7 518.7 L83.05 520.05 L81.7 521.7 L80.35 520.05 L78.7 518.7 L80.35 517.35 Z" fill="#fff"/>
<path d="M137.7 515.7 L139.05 517.35 L140.7 518.7 L139.05 520.05 L137.7 521.7 L136.35 520.05 L134.7 518.7 L136.35 517.35 Z" fill="#fff"/>
<path d="M193.7 515.7 L195.05 517.35 L196.7 518.7 L195.05 520.05 L193.7 521.7 L192.35 520.05 L190.7 518.7 L192.35 517.35 Z" fill="#fff"/>
<path d="M249.7 515.7 L251.05 517.35 L252.7 518.7 L251.05 520.05 L249.7 521.7 L248.35 520.05 L246.7 518.7 L248.35 517.35 Z" fill="#fff"/>
<path d="M305.7 515.7 L307.05 517.35 L308.7 518.7 L307.05 520.05 L305.7 521.7 L304.35 520.05 L302.7 518.7 L304.35 517.35 Z" fill="#fff"/>
<path d="M361.7 515.7 L363.05 517.35 L364.7 518.7 L363.05 520.05 L361.7 521.7 L360.35 520.05 L358.7 518.7 L360.35 517.35 Z" fill="#fff"/>
<path d="M417.7 515.7 L419.05 517.35 L420.7 518.7 L419.05 520.05 L417.7 521.7 L416.35 520.05 L414.7 518.7 L416.35 517.35 Z" fill="#fff"/>
<path d="M489.2 515.27 L490.55 516.92 L492.2 518.27 L490.55 519.62 L489.2 521.27 L487.85 519.62 L486.2 518.27 L487.85 516.92 Z" fill="#fff"/>
<path d="M544.85 515.27 L546.2 516.92 L547.85 518.27 L546.2 519.62 L544.85 521.27 L543.5 519.62 L541.85 518.27 L543.5 516.92 Z" fill="#fff"/>
<path d="M600.5 515.27 L601.85 516.92 L603.5 518.27 L601.85 519.62 L600.5 521.27 L599.15 519.62 L597.5 518.27 L599.15 516.92 Z" fill="#fff"/>
<path d="M656.15 515.27 L657.5 516.92 L659.15 518.27 L657.5 519.62 L656.15 521.27 L654.8 519.62 L653.15 518.27 L654.8 516.92 Z" fill="#fff"/>
<path d="M711.8 515.27 L713.15 516.92 L714.8 518.27 L713.15 519.62 L711.8 521.27 L710.45 519.62 L708.8 518.27 L710.45 516.92 Z" fill="#fff"/>
<path d="M81.7 558.7 L83.05 560.35 L84.7 561.7 L83.05 563.05 L81.7 564.7 L80.35 563.05 L78.7 561.7 L80.35 560.35 Z" fill="#fff"/>
<path d="M137.7 558.7 L139.05 560.35 L140.7 561.7 L139.05 563.05 L137.7 564.7 L136.35 563.05 L134.7 561.7 L136.35 560.35 Z" fill="#fff"/>
<path d="M193.7 558.7 L195.05 560.35 L196.7 561.7 L195.05 563.05 L193.7 564.7 L192.35 563.05 L190.7 561.7 L192.35 560.35 Z" fill="#fff"/>
<path d="M249.7 558.7 L251.05 560.35 L252.7 561.7 L251.05 563.05 L249.7 564.7 L248.35 563.05 L246.7 561.7 L248.35 560.35 Z" fill="#fff"/>
<path d="M305.7 558.7 L307.05 560.35 L308.7 561.7 L307.05 563.05 L305.7 564.7 L304.35 563.05 L302.7 561.7 L304.35 560.35 Z" fill="#fff"/>
<path d="M361.7 558.7 L363.05 560.35 L364.7 561.7 L363.05 563.05 L361.7 564.7 L360.35 563.05 L358.7 561.7 L360.35 560.35 Z" fill="#fff"/>
<path d="M417.7 558.7 L419.05 560.35 L420.7 561.7 L419.05 563.05 L417.7 564.7 L416.35 563.05 L414.7 561.7 L416.35 560.35 Z" fill="#fff"/>
<path d="M489.2 558.14 L490.55 559.79 L492.2 561.14 L490.55 562.49 L489.2 564.14 L487.85 562.49 L486.2 561.14 L487.85 559.79 Z" fill="#fff"/>
<path d="M544.85 558.14 L546.2 559.79 L547.85 561.14 L546.2 562.49 L544.85 564.14 L543.5 562.49 L541.85 561.14 L543.5 559.79 Z" fill="#fff"/>
<path d="M600.5 558.14 L601.85 559.79 L603.5 561.14 L601.85 562.49 L600.5 564.14 L599.15 562.49 L597.5 561.14 L599.15 559.79 Z" fill="#fff"/>
<path d="M656.15 558.14 L657.5 559.79 L659.15 561.14 L657.5 562.49 L656.15 564.14 L654.8 562.49 L653.15 561.14 L654.8 559.79 Z" fill="#fff"/>
<path d="M711.8 558.14 L713.15 559.79 L714.8 561.14 L713.15 562.49 L711.8 564.14 L710.45 562.49 L708.8 561.14 L710.45 559.79 Z" fill="#fff"/>
<path d="M81.7 601.7 L83.05 603.35 L84.7 604.7 L83.05 606.05 L81.7 607.7 L80.35 606.05 L78.7 604.7 L80.35 603.35 Z" fill="#fff"/>
<path d="M137.7 601.7 L139.05 603.35 L140.7 604.7 L139.05 606.05 L137.7 607.7 L136.35 606.05 L134.7 604.7 L136.35 603.35 Z" fill="#fff"/>
<path d="M193.7 601.7 L195.05 603.35 L196.7 604.7 L195.05 606.05 L193.7 607.7 L192.35 606.05 L190.7 604.7 L192.35 603.35 Z" fill="#fff"/>
<path d="M249.7 601.7 L251.05 603.35 L252.7 604.7 L251.05 606.05 L249.7 607.7 L248.35 606.05 L246.7 604.7 L248.35 603.35 Z" fill="#fff"/>
<path d="M305.7 601.7 L307.05 603.35 L308.7 604.7 L307.05 606.05 L305.7 607.7 L304.35 606.05 L302.7 604.7 L304.35 603.35 Z" fill="#fff"/>
<path d="M361.7 601.7 L363.05 603.35 L364.7 604.7 L363.05 606.05 L361.7 607.7 L360.35 606.05 L358.7 604.7 L360.35 603.35 Z" fill="#fff"/>
<path d="M417.7 601.7 L419.05 603.35 L420.7 604.7 L419.05 606.05 L417.7 607.7 L416.35 606.05 L414.7 604.7 L416.35 603.35 Z" fill="#fff"/>
<path d="M489.2 601.01 L490.55 602.66 L492.2 604.01 L490.55 605.36 L489.2 607.01 L487.85 605.36 L486.2 604.01 L487.85 602.66 Z" fill="#fff"/>
<path d="M544.85 601.01 L546.2 602.66 L547.85 604.01 L546.2 605.36 L544.85 607.01 L543.5 605.36 L541.85 604.01 L543.5 602.66 Z" fill="#fff"/>
<path d="M600.5 601.01 L601.85 602.66 L603.5 604.01 L601.85 605.36 L600.5 607.01 L599.15 605.36 L597.5 604.01 L599.15 602.66 Z" fill="#fff"/>
<path d="M656.15 601.01 L657.5 602.66 L659.15 604.01 L657.5 605.36 L656.15 607.01 L654.8 605.36 L653.15 604.01 L654.8 602.66 Z" fill="#fff"/>
<path d="M711.8 601.01 L713.15 602.66 L714.8 604.01 L713.15 605.36 L711.8 607.01 L710.45 605.36 L708.8 604.01 L710.45 602.66 Z" fill="#fff"/>
<path d="M81.7 644.7 L83.05 646.35 L84.7 647.7 L83.05 649.05 L81.7 650.7 L80.35 649.05 L78.7 647.7 L80.35 646.35 Z" fill="#fff"/>
<path d="M137.7 644.7 L139.05 646.35 L140.7 647.7 L139.05 649.05 L137.7 650.7 L136.35 649.05 L134.7 647.7 L136.35 646.35 Z" fill="#fff"/>
<path d="M193.7 644.7 L195.05 646.35 L196.7 647.7 L195.05 649.05 L193.7 650.7 L192.35 649.05 L190.7 647.7 L192.35 646.35 Z" fill="#fff"/>
<path d="M249.7 644.7 L251.05 646.35 L252.7 647.7 L251.05 649.05 L249.7 650.7 L248.35 649.05 L246.7 647.7 L248.35 646.35 Z" fill="#fff"/>
<path d="M305.7 644.7 L307.05 646.35 L308.7 647.7 L307.05 649.05 L305.7 650.7 L304.35 649.05 L302.7 647.7 L304.35 646.35 Z" fill="#fff"/>
<path d="M361.7 644.7 L363.05 646.35 L364.7 647.7 L363.05 649.05 L361.7 650.7 L360.35 649.05 L358.7 647.7 L360.35 646.35 Z" fill="#fff"/>
<path d="M417.7 644.7 L419.05 646.35 L420.7 647.7 L419.05 649.05 L417.7 650.7 L416.35 649.05 L414.7 647.7 L416.35 646.35 Z" fill="#fff"/>
<path d="M489.2 643.88 L490.55 645.53 L492.2 646.88 L490.55 648.23 L489.2 649.88 L487.85 648.23 L486.2 646.88 L487.85 645.53 Z" fill="#fff"/>
<path d="M544.85 643.88 L546.2 645.53 L547.85 646.88 L546.2 648.23 L544.85 649.88 L543.5 648.23 L541.85 646.88 L543.5 645.53 Z" fill="#fff"/>
<path d="M600.5 643.88 L601.85 645.53 L603.5 646.88 L601.85 648.23 L600.5 649.88 L599.15 648.23 L597.5 646.88 L599.15 645.53 Z" fill="#fff"/>
<path d="M656.15 643.88 L657.5 645.53 L659.15 646.88 L657.5 648.23 L656.15 649.88 L654.8 648.23 L653.15 646.88 L654.8 645.53 Z" fill="#fff"/>
<path d="M711.8 643.88 L713.15 645.53 L714.8 646.88 L713.15 648.23 L711.8 649.88 L710.45 648.23 L708.8 646.88 L710.45 645.53 Z" fill="#fff"/>
<path d="M81.7 687.7 L83.05 689.35 L84.7 690.7 L83.05 692.05 L81.7 693.7 L80.35 692.05 L78.7 690.7 L80.35 689.35 Z" fill="#fff"/>
<path d="M137.7 687.7 L139.05 689.35 L140.7 690.7 L139.05 692.05 L137.7 693.7 L136.35 692.05 L134.7 690.7 L136.35 689.35 Z" fill="#fff"/>
<path d="M193.7 687.7 L195.05 689.35 L196.7 690.7 L195.05 692.05 L193.7 693.7 L192.35 692.05 L190.7 690.7 L192.35 689.35 Z" fill="#fff"/>
<path d="M249.7 687.7 L251.05 689.35 L252.7 690.7 L251.05 692.05 L249.7 693.7 L248.35 692.05 L246.7 690.7 L248.35 689.35 Z" fill="#fff"/>
<path d="M305.7 687.7 L307.05 689.35 L308.7 690.7 L307.05 692.05 L305.7 693.7 L304.35 692.05 L302.7 690.7 L304.35 689.35 Z" fill="#fff"/>
<path d="M361.7 687.7 L363.05 689.35 L364.7 690.7 L363.05 692.05 L361.7 693.7 L360.35 692.05 L358.7 690.7 L360.35 689.35 Z" fill="#fff"/>
<path d="M417.7 687.7 L419.05 689.35 L420.7 690.7 L419.05 692.05 L417.7 693.7 L416.35 692.05 L414.7 690.7 L416.35 689.35 Z" fill="#fff"/>
<path d="M489.2 686.75 L490.55 688.4 L492.2 689.75 L490.55 691.1 L489.2 692.75 L487.85 691.1 L486.2 689.75 L487.85 688.4 Z" fill="#fff"/>
<path d="M544.85 686.75 L546.2 688.4 L547.85 689.75 L546.2 691.1 L544.85 692.75 L543.5 691.1 L541.85 689.75 L543.5 688.4 Z" fill="#fff"/>
<path d="M600.5 686.75 L601.85 688.4 L603.5 689.75 L601.85 691.1 L600.5 692.75 L599.15 691.1 L597.5 689.75 L599.15 688.4 Z" fill="#fff"/>
<path d="M656.15 686.75 L657.5 688.4 L659.15 689.75 L657.5 691.1 L656.15 692.75 L654.8 691.1 L653.15 689.75 L654.8 688.4 Z" fill="#fff"/>
<path d="M711.8 686.75 L713.15 688.4 L714.8 689.75 L713.15 691.1 L711.8 692.75 L710.45 691.1 L708.8 689.75 L710.45 688.4 Z" fill="#fff"/>
<path d="M81.7 730.7 L83.05 732.35 L84.7 733.7 L83.05 735.05 L81.7 736.7 L80.35 735.05 L78.7 733.7 L80.35 732.35 Z" fill="#fff"/>
<path d="M137.7 730.7 L139.05 732.35 L140.7 733.7 L139.05 735.05 L137.7 736.7 L136.35 735.05 L134.7 733.7 L136.35 732.35 Z" fill="#fff"/>
<path d="M193.7 730.7 L195.05 732.35 L196.7 733.7 L195.05 735.05 L193.7 736.7 L192.35 735.05 L190.7 733.7 L192.35 732.35 Z" fill="#fff"/>
<path d="M249.7 730.7 L251.05 732.35 L252.7 733.7 L251.05 735.05 L249.7 736.7 L248.35 735.05 L246.7 733.7 L248.35 732.35 Z" fill="#fff"/>
<path d="M305.7 730.7 L307.05 732.35 L308.7 733.7 L307.05 735.05 L305.7 736.7 L304.35 735.05 L302.7 733.7 L304.35 732.35 Z" fill="#fff"/>
<path d="M361.7 730.7 L363.05 732.35 L364.7 733.7 L363.05 735.05 L361.7 736.7 L360.35 735.05 L358.7 733.7 L360.35 732.35 Z" fill="#fff"/>
<path d="M417.7 730.7 L419.05 732.35 L420.7 733.7 L419.05 735.05 L417.7 736.7 L416.35 735.05 L414.7 733.7 L416.35 732.35 Z" fill="#fff"/>
<path d="M489.2 729.62 L490.55 731.27 L492.2 732.62 L490.55 733.97 L489.2 735.62 L487.85 733.97 L486.2 732.62 L487.85 731.27 Z" fill="#fff"/>
<path d="M544.85 729.62 L546.2 731.27 L547.85 732.62 L546.2 733.97 L544.85 735.62 L543.5 733.97 L541.85 732.62 L543.5 731.27 Z" fill="#fff"/>
<path d="M600.5 729.62 L601.85 731.27 L603.5 732.62 L601.85 733.97 L600.5 735.62 L599.15 733.97 L597.5 732.62 L599.15 731.27 Z" fill="#fff"/>
<path d="M656.15 729.62 L657.5 731.27 L659.15 732.62 L657.5 733.97 L656.15 735.62 L654.8 733.97 L653.15 732.62 L654.8 731.27 Z" fill="#fff"/>
<path d="M711.8 729.62 L713.15 731.27 L714.8 732.62 L713.15 733.97 L711.8 735.62 L710.45 733.97 L708.8 732.62 L710.45 731.27 Z" fill="#fff"/>
</g></g>
<rect x="362" y="389.8" width="57" height="43.4" fill="#1e90ff" fill-opacity="0.47"/>
<rect x="360.9" y="388.7" width="59.1" height="45.5" fill="none" stroke="#8c8c8c" stroke-width="0.7"/>
<rect x="362.3" y="390.1" width="56.3" height="42.7" fill="none" stroke="#6495ed" stroke-width="2.5"/>
<rect x="363.8" y="391.6" width="53.3" height="39.7" fill="none" stroke="#7d8fa8" stroke-width="0.5"/>
<path d="M390.5 406 V419 M384 412.5 H397" stroke="#ffff00" stroke-width="2.6"/>
</g>
<path d="M60.5 217 V753 M163.5 217 V753 M267.5 217 V753 M370.5 217 V753 M473.5 217 V753 M576.5 217 V753 M680.5 217 V753 M60 340.5 H721 M60 444.5 H721 M60 547.5 H721 M60 650.5 H721" stroke="#4c4c6a" stroke-width="1" fill="none"/>
<rect x="60" y="237" width="1" height="497" fill="#e4e4e4"/>
<path d="M60.5 230.2 C64 231.4 66.4 233.6 67.6 237" stroke="#4c4c6a" stroke-width="0.8" fill="none"/>
<text x="61.5" y="228" font-family="Liberation Sans, sans-serif" font-size="11" letter-spacing="0.7" fill="#4b5070">0</text>
<text x="164.5" y="228" font-family="Liberation Sans, sans-serif" font-size="11" letter-spacing="0.7" fill="#4b5070">100</text>
<text x="268.5" y="228" font-family="Liberation Sans, sans-serif" font-size="11" letter-spacing="0.7" fill="#4b5070">200</text>
<text x="371.5" y="228" font-family="Liberation Sans, sans-serif" font-size="11" letter-spacing="0.7" fill="#4b5070">300</text>
<text x="474.5" y="228" font-family="Liberation Sans, sans-serif" font-size="11" letter-spacing="0.7" fill="#4b5070">400</text>
<text x="577.5" y="228" font-family="Liberation Sans, sans-serif" font-size="11" letter-spacing="0.7" fill="#4b5070">500</text>
<text x="681.5" y="228" font-family="Liberation Sans, sans-serif" font-size="11" letter-spacing="0.7" fill="#4b5070">600</text>
<text x="61.5" y="248" font-family="Liberation Sans, sans-serif" font-size="11" letter-spacing="0.4" fill="#4b5070" fill-opacity="0.8">0</text>
<text x="61.5" y="351" font-family="Liberation Sans, sans-serif" font-size="11" letter-spacing="0.4" fill="#4b5070" fill-opacity="0.8">100</text>
<text x="61.5" y="455" font-family="Liberation Sans, sans-serif" font-size="11" letter-spacing="0.4" fill="#4b5070" fill-opacity="0.8">200</text>
<text x="61.5" y="558" font-family="Liberation Sans, sans-serif" font-size="11" letter-spacing="0.4" fill="#4b5070" fill-opacity="0.8">300</text>
<text x="61.5" y="661" font-family="Liberation Sans, sans-serif" font-size="11" letter-spacing="0.4" fill="#4b5070" fill-opacity="0.8">400</text>
</svg>

<!-- right panel -->
<div class="t" id="rot" style="left:732px;top:238px;font-size:11.6px;transform:scaleX(0.9342);transform-origin:left center;">Rotation Tolerance: 2°</div>
<div class="abs" style="left:737px;top:266px;width:245px;height:4px;background:#e7eaea;border:1px solid #d6d6d6"></div>
<svg class="abs" style="left:739px;top:259px" width="13" height="21" viewBox="0 0 13 21"><path d="M1 1 H12 V15 L6.5 20.5 L1 15 Z" fill="#0078d7"/></svg>
<div class="abs" style="left:742px;top:280px;width:235px;height:3px;background-image:repeating-linear-gradient(90deg,#bdbdbd 0,#bdbdbd 2px,#e4e4e4 2px,#e4e4e4 3px)"></div>
<div class="abs" style="left:742px;top:280px;width:1px;height:4px;background:#bdbdbd"></div>
<div class="abs" style="left:976px;top:280px;width:1px;height:4px;background:#bdbdbd"></div>

<div class="t" id="pyr" style="left:732px;top:312px;font-size:11.6px;transform:scaleX(0.8927);transform-origin:left center;">Minimal Pyramid Level: 0</div>
<div class="abs" style="left:737px;top:340px;width:242px;height:4px;background:#e7eaea;border:1px solid #d6d6d6"></div>
<svg class="abs" style="left:736px;top:333px" width="13" height="21" viewBox="0 0 13 21"><path d="M1 1 H12 V15 L6.5 20.5 L1 15 Z" fill="#0078d7"/></svg>
<div class="abs" style="left:742px;top:354px;width:1px;height:4px;background:#c4c4c4"></div>
<div class="abs" style="left:819px;top:354px;width:1px;height:4px;background:#c4c4c4"></div>
<div class="abs" style="left:896px;top:354px;width:1px;height:4px;background:#c4c4c4"></div>
<div class="abs" style="left:973px;top:354px;width:1px;height:4px;background:#c4c4c4"></div>

<div class="abs" style="left:729px;top:404px;width:13px;height:13px;background:#fff;border:1px solid #333"></div>
<svg class="abs" style="left:730px;top:405px" width="11" height="11" viewBox="0 0 11 11"><path d="M1.6 5.4 L4.2 8.2 L9.4 2.2" stroke="#111" stroke-width="1.2" fill="none"/></svg>
<div class="t" id="show" style="left:748px;top:405px;font-size:11.6px;transform:scaleX(0.9321);transform-origin:left center;">Show object center</div>

<!-- bottom buttons -->
<svg class="abs" style="left:5px;top:762px" width="26" height="26" viewBox="-0.4 -0.3 26 26">
  <defs>
    <radialGradient id="hg" cx="0.68" cy="0.55" r="0.75">
      <stop offset="0" stop-color="#8ecbf6"/>
      <stop offset="0.45" stop-color="#5c9fd8"/>
      <stop offset="1" stop-color="#3f7fb8"/>
    </radialGradient>
    <linearGradient id="hr" x1="0" y1="0" x2="0" y2="1">
      <stop offset="0" stop-color="#f6f6f8"/><stop offset="0.5" stop-color="#e4e2e8"/><stop offset="1" stop-color="#d0ccd4"/>
    </linearGradient>
  </defs>
  <circle cx="12.5" cy="12.5" r="11.7" fill="url(#hr)" stroke="#bdb9c4" stroke-width="0.7"/>
  <circle cx="12.5" cy="12.5" r="8.9" fill="url(#hg)" stroke="#2f5f8e" stroke-width="0.9"/>
  <text x="12.6" y="18.6" font-family="Liberation Sans, sans-serif" font-weight="bold" font-size="17" text-anchor="middle" fill="#fff">?</text>
</svg>
<div class="btn" style="left:808px;top:765px;width:92px;height:22px;border:2px solid #0078d7"></div>
<div class="t" id="ok" style="left:807px;top:771px;width:92px;text-align:center;font-size:11.4px;transform:scaleX(0.9625);transform-origin:center center;">OK</div>
<div class="btn" style="left:908px;top:765px;width:92px;height:22px"></div>
<div class="t" id="cancel" style="left:907px;top:771px;width:92px;text-align:center;font-size:11.4px;transform:scaleX(0.9708);transform-origin:center center;">Cancel</div>
</body>
</html>
